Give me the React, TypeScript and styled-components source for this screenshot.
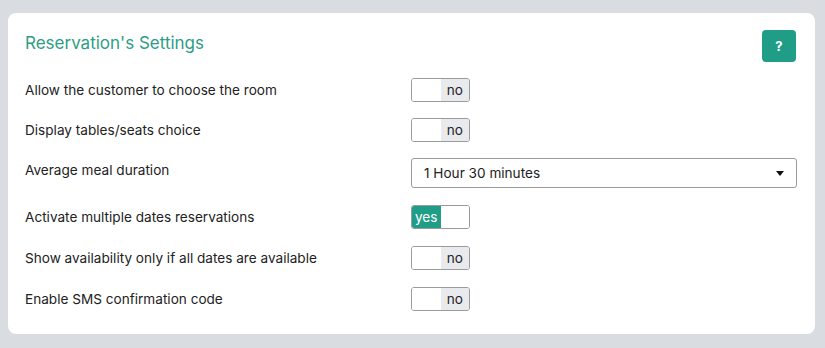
import styled, { createGlobalStyle } from "styled-components";

const GlobalStyle = createGlobalStyle`
  html, body {
    margin: 0;
    background-color: #d9dce0;
  }
  body {
    padding: 13px 10px 14px 8px;
    font-family: Inter, "Noto Sans", sans-serif;
  }
`;

const Card = styled.div`
  background-color: white;
  border-radius: 8px;
  padding: 17px 18px 23px 17px;
  display: flex;
  flex-direction: column;
  gap: 16px;
`;

const Header = styled.div`
  display: flex;
  justify-content: space-between;
  align-items: flex-start;
  padding-right: 1px;
`;

const Title = styled.h2`
  margin: 3px 0 0;
  font-size: 17px;
  font-weight: 400;
  color: #2d9e86;
`;

const HelpButton = styled.button`
  width: 34px;
  height: 32px;
  border: none;
  border-radius: 4px;
  background-color: #1f9d87;
  color: white;
  font-family: inherit;
  font-weight: 700;
  font-size: 13px;
  cursor: pointer;
`;

const Row = styled.div<{ $loose?: boolean }>`
  display: grid;
  grid-template-columns: 386px 1fr;
  align-items: center;
  margin-top: ${(p) => (p.$loose ? "1px" : "0")};
`;

const Label = styled.div<{ $shift?: number }>`
  font-size: 13.6px;
  color: #222;
  margin-top: ${(p) => (p.$shift ? `${p.$shift}px` : "0")};
`;

const SwitchBox = styled.div`
  width: 59px;
  height: 24px;
  box-sizing: border-box;
  border: 1px solid #9b9b9b;
  border-radius: 3px;
  overflow: hidden;
  display: flex;
`;

const SwitchHalf = styled.div<{ $on?: boolean; $gray?: boolean }>`
  flex: 1;
  display: flex;
  align-items: center;
  justify-content: center;
  font-size: 13.6px;
  background-color: ${(p) => (p.$on ? "#1f9d87" : p.$gray ? "#e9eaee" : "white")};
  color: ${(p) => (p.$on ? "white" : "#222")};
`;

const Select = styled.div`
  height: 30px;
  box-sizing: border-box;
  border: 1px solid #9b9b9b;
  border-radius: 3px;
  display: flex;
  align-items: center;
  justify-content: space-between;
  padding: 0 12px 0 12px;
  font-size: 13.6px;
  color: #222;
`;

const Caret = styled.span`
  width: 0;
  height: 0;
  border-left: 4px solid transparent;
  border-right: 4px solid transparent;
  border-top: 5px solid #111;
`;

function Toggle({ on }: { on: boolean }) {
  return (
    <SwitchBox>
      {on ? (
        <>
          <SwitchHalf $on>yes</SwitchHalf>
          <SwitchHalf />
        </>
      ) : (
        <>
          <SwitchHalf />
          <SwitchHalf $gray>no</SwitchHalf>
        </>
      )}
    </SwitchBox>
  );
}

export default function App() {
  return (
    <>
      <GlobalStyle />
      <Card>
        <Header>
          <Title>Reservation's Settings</Title>
          <HelpButton>?</HelpButton>
        </Header>
        <Row>
          <Label>Allow the customer to choose the room</Label>
          <Toggle on={false} />
        </Row>
        <Row>
          <Label>Display tables/seats choice</Label>
          <Toggle on={false} />
        </Row>
        <Row>
          <Label $shift={-7}>Average meal duration</Label>
          <Select>
            <span>1 Hour 30 minutes</span>
            <Caret />
          </Select>
        </Row>
        <Row $loose>
          <Label>Activate multiple dates reservations</Label>
          <Toggle on />
        </Row>
        <Row $loose>
          <Label>Show availability only if all dates are available</Label>
          <Toggle on={false} />
        </Row>
        <Row $loose>
          <Label>Enable SMS confirmation code</Label>
          <Toggle on={false} />
        </Row>
      </Card>
    </>
  );
}
